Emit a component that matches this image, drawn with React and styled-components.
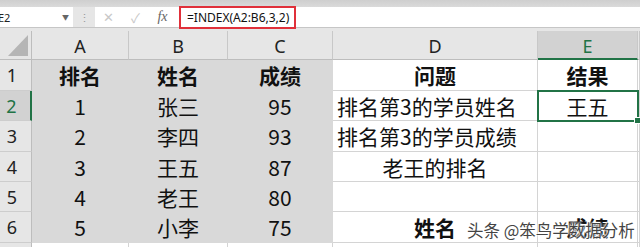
import React from "react";
import styled, { createGlobalStyle } from "styled-components";

const GlobalStyle = createGlobalStyle`
  html, body {
    margin: 0;
    padding: 0;
    background: #e6e6e6;
  }
  body {
    width: 640px;
    height: 247px;
    overflow: hidden;
    font-family: "Noto Sans", "Noto Sans CJK SC", sans-serif;
  }
`;

const GREEN = "#217346";

// row header, A, B, C, D, E, F (sliver)
const colWidths = [32, 97, 99, 105, 205, 100, 2];
const rowHeights = [29, 31, 30, 31, 30, 30, 31, 30];
const letters = ["A", "B", "C", "D", "E", ""];

const rows = [
  ["排名", "姓名", "成绩", "问题", "结果", ""],
  ["1", "张三", "95", "排名第3的学员姓名", "王五", ""],
  ["2", "李四", "93", "排名第3的学员成绩", "", ""],
  ["3", "王五", "87", "老王的排名", "", ""],
  ["4", "老王", "80", "", "", ""],
  ["5", "小李", "75", "姓名", "成绩", ""],
  ["", "", "", "", "", ""],
];

const boldCells = ["1-0", "1-1", "1-2", "1-3", "1-4", "6-3", "6-4"];
const leftCells = ["2-3", "3-3"];

const Page = styled.div`
  position: relative;
  width: 640px;
  height: 247px;
  overflow: hidden;
  background: #e6e6e6;
`;

const RibbonEdge = styled.div`
  height: 7px;
  background: linear-gradient(#cfcfcf, #dadada);
`;

const FormulaBar = styled.div`
  display: flex;
  align-items: center;
  height: 20px;
  border-bottom: 1px solid #c6c6c6;
  background: #e6e6e6;
`;

const NameBox = styled.div`
  display: flex;
  align-items: center;
  justify-content: space-between;
  width: 75px;
  height: 100%;
  box-sizing: border-box;
  padding: 0 4px 0 0;
  background: #fff;
  font-size: 11px;
  color: #222;
  margin-left: -2px;
`;

const Caret = styled.span`
  font-size: 7px;
  color: #666;
`;

const Grip = styled.div`
  width: 22px;
  text-align: center;
  color: #999;
  font-size: 11px;
`;

const Input = styled.div`
  flex: 1;
  display: flex;
  align-items: center;
  height: 100%;
  background: #fff;
`;

const ToolIcon = styled.span`
  width: 27px;
  text-align: center;
  color: ${(p) => p.$color || "#c8c8c8"};
  font-size: ${(p) => p.$size || 12}px;
  font-family: ${(p) => (p.$serif ? '"Liberation Serif", serif' : "inherit")};
  font-style: ${(p) => (p.$serif ? "italic" : "normal")};
`;

const Formula = styled.div`
  display: flex;
  align-items: center;
  height: 23px;
  box-sizing: border-box;
  margin-left: 3px;
  padding: 0 5px 0 6px;
  border: 2px solid #e0303a;
  font-size: 12px;
  color: #111;
  white-space: nowrap;
`;

const Gap = styled.div`
  height: 3px;
`;

const Sheet = styled.div`
  display: grid;
  grid-template-columns: ${colWidths.map((w) => w + "px").join(" ")};
  grid-template-rows: ${rowHeights.map((h) => h + "px").join(" ")};
`;

const Corner = styled.div`
  position: relative;
  background: #e6e6e6;
  border-right: 1px solid #bdbdbd;
  border-bottom: 1px solid #bdbdbd;
  &::after {
    content: "";
    position: absolute;
    right: 3px;
    bottom: 3px;
    width: 0;
    height: 0;
    border-left: 20px solid transparent;
    border-bottom: 21px solid #b5b5b5;
  }
`;

const ColHead = styled.div`
  display: flex;
  align-items: center;
  justify-content: center;
  box-sizing: border-box;
  background: ${(p) => (p.$active ? "#d2d2d2" : "#e6e6e6")};
  color: ${(p) => (p.$active ? GREEN : "#222")};
  border-right: 1px solid #c8c8c8;
  border-bottom: ${(p) => (p.$active ? `2px solid ${GREEN}` : "1px solid #bdbdbd")};
  font-size: 18px;
  padding-top: 2px;
`;

const RowHead = styled.div`
  display: flex;
  align-items: center;
  justify-content: center;
  box-sizing: border-box;
  padding-right: 7px;
  background: ${(p) => (p.$active ? "#d2d2d2" : "#e6e6e6")};
  color: ${(p) => (p.$active ? GREEN : "#222")};
  border-bottom: 1px solid #cdcdcd;
  border-right: ${(p) => (p.$active ? `2px solid ${GREEN}` : "1px solid #bdbdbd")};
  font-size: 18px;
`;

const Cell = styled.div`
  position: relative;
  display: flex;
  align-items: center;
  justify-content: ${(p) => (p.$left ? "flex-start" : "center")};
  box-sizing: border-box;
  padding-left: ${(p) => (p.$left ? "4px" : "0")};
  background: ${(p) => (p.$fill ? "#d9d9d9" : "#fff")};
  border-right: 1px solid ${(p) => (p.$fill ? "#d9d9d9" : "#d4d4d4")};
  border-bottom: 1px solid ${(p) => (p.$fill ? "#d9d9d9" : "#d4d4d4")};
  font-family: "Noto Sans CJK SC", "Noto Sans", sans-serif;
  font-size: 21px;
  font-weight: ${(p) => (p.$bold ? 700 : 400)};
  color: #111;
  white-space: nowrap;
  ${(p) =>
    p.$selected &&
    `
    outline: 2px solid ${GREEN};
    outline-offset: -1px;
    z-index: 1;
    &::after {
      content: "";
      position: absolute;
      right: -4px;
      bottom: -4px;
      width: 5px;
      height: 5px;
      background: ${GREEN};
      border: 1px solid #fff;
    }
  `}
`;

const Watermark = styled.div`
  position: absolute;
  left: 467px;
  top: 218px;
  font-family: "Noto Sans CJK SC", sans-serif;
  font-size: 16.5px;
  color: #444;
  text-shadow: 0 0 2px #fff, 0 0 2px #fff, 0 0 3px #fff;
  white-space: nowrap;
  z-index: 2;
`;

function App() {
  const grid = [<Corner key="corner" />];
  letters.forEach((l, i) => {
    grid.push(
      <ColHead key={"h" + i} $active={l === "E"}>
        {l}
      </ColHead>
    );
  });

  rows.forEach((row, ri) => {
    const r = ri + 1;
    grid.push(
      <RowHead key={"r" + r} $active={r === 2}>
        {r <= 6 ? r : ""}
      </RowHead>
    );
    row.forEach((text, ci) => {
      const id = r + "-" + ci;
      grid.push(
        <Cell
          key={id}
          $fill={ci < 3 && r <= 6}
          $bold={boldCells.includes(id)}
          $left={leftCells.includes(id)}
          $selected={id === "2-4"}
        >
          {text}
        </Cell>
      );
    });
  });

  return (
    <Page>
      <GlobalStyle />
      <RibbonEdge />
      <FormulaBar>
        <NameBox>
          <span>E2</span>
          <Caret>▼</Caret>
        </NameBox>
        <Grip>⋮</Grip>
        <Input>
          <ToolIcon $size={13}>✕</ToolIcon>
          <ToolIcon $size={13}>✓</ToolIcon>
          <ToolIcon $serif $size={14} $color="#666">
            fx
          </ToolIcon>
          <Formula>=INDEX(A2:B6,3,2)</Formula>
        </Input>
      </FormulaBar>
      <Gap />
      <Sheet>{grid}</Sheet>
      <Watermark>头条 @笨鸟学数据分析</Watermark>
    </Page>
  );
}

export default App;
